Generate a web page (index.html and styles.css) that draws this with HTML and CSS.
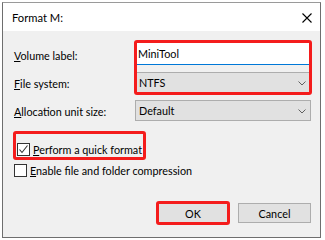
FILE: index.html
```html
<!DOCTYPE html>
<html lang="en">
<head>
  <meta charset="UTF-8">
  <title>Format M:</title>
  <link rel="stylesheet" href="styles.css">
</head>
<body>
  <div class="window">
    <div class="titlebar">
      <span class="title">Format M:</span>
      <svg class="close" width="10" height="10" viewBox="0 0 10 10">
        <path d="M0.5 0.5 L9.5 9.5 M9.5 0.5 L0.5 9.5" stroke="#000" stroke-width="1.1" fill="none"/>
      </svg>
    </div>

    <div class="content">
      <div class="form">
        <label class="lbl row1"><u>V</u>olume label:</label>
        <div class="field textbox row1">MiniTool</div>

        <label class="lbl row2"><u>F</u>ile system:</label>
        <div class="field select row2">
          <span>NTFS</span>
          <svg class="chev" width="8" height="5" viewBox="0 0 8 5"><path d="M0.5 0.5 L4 4 L7.5 0.5" stroke="#606060" fill="none"/></svg>
        </div>

        <div class="mark"></div>

        <label class="lbl row3"><u>A</u>llocation unit size:</label>
        <div class="field select row3">
          <span>Default</span>
          <svg class="chev" width="8" height="5" viewBox="0 0 8 5"><path d="M0.5 0.5 L4 4 L7.5 0.5" stroke="#606060" fill="none"/></svg>
        </div>
      </div>

      <div class="checks">
        <div class="mark-box">
          <div class="check">
            <span class="box">
              <svg width="11" height="11" viewBox="0 0 11 11"><path d="M1.5 5.5 L4 8.5 L9.5 1.5" stroke="#333" stroke-width="1.1" fill="none"/></svg>
            </span>
            <span><u>P</u>erform a quick format</span>
          </div>
        </div>
        <div class="check plain">
          <span class="box"></span>
          <span><u>E</u>nable file and folder compression</span>
        </div>
      </div>

      <div class="buttons">
        <button class="btn ok">OK</button>
        <button class="btn">Cancel</button>
      </div>
    </div>
  </div>
</body>
</html>
```

FILE: styles.css
```css
body {
  margin: 0;
  padding: 2px;
  background: #fff;
  font-family: 'Lato', sans-serif;
  font-size: 10.8px;
  color: #000;
}

.window {
  width: 317px;
  height: 234px;
  border: 1px solid #6e6e6e;
  border-top-color: #9a9a9a;
  background: #f0f0f0;
  display: flex;
  flex-direction: column;
}

.titlebar {
  height: 28px;
  background: #fff;
  display: flex;
  align-items: center;
  justify-content: space-between;
  padding: 0 8px 0 9px;
  font-size: 11.2px;
}

.close {
  margin-top: 2px;
}

.content {
  padding: 12px 9px 0 11px;
}

/* label / field grid */
.form {
  display: grid;
  grid-template-columns: 121px 1fr;
  grid-template-rows: 22px 21px 21px;
  row-gap: 7px;
}

.lbl {
  align-self: center;
  padding-top: 2px;
}

.row1 { grid-row: 1; }
.row2 { grid-row: 2; }
.row3 { grid-row: 3; }

.lbl { grid-column: 1; }
.field { grid-column: 2; }

.field {
  display: flex;
  align-items: center;
  padding-left: 3px;
}

.textbox {
  background: #fff;
  border-bottom: 1px solid #0078d7;
}

.select {
  background: #e1e1e1;
  border: 1px solid #adadad;
  justify-content: space-between;
  padding-right: 4px;
}

.chev {
  margin-top: 2px;
}

.mark {
  grid-column: 2;
  grid-row: 1 / 3;
  margin: -3px -1px -2px -1px;
  border: 3px solid #f41c1c;
  border-radius: 3px;
  pointer-events: none;
}

/* checkboxes */
.checks {
  margin-top: 10px;
}

.mark-box {
  display: inline-block;
  margin-left: -1px;
  padding: 7px 1px 0 1px;
  border: 3px solid #f41c1c;
  border-radius: 3px;
}

.check {
  display: flex;
  align-items: center;
  gap: 3px;
  height: 16px;
}

.check.plain {
  height: 20px;
}

.box {
  width: 11px;
  height: 11px;
  border: 1px solid #333;
  background: #fff;
  display: flex;
}

/* buttons */
.buttons {
  margin-top: 21px;
  display: flex;
  justify-content: flex-end;
  align-items: center;
  gap: 8px;
}

.btn {
  font-family: 'Lato', sans-serif;
  font-size: 10.8px;
  color: #000;
  background: #e1e1e1;
  border: 1px solid #adadad;
  width: 73px;
  height: 20px;
  padding: 0;
}

.btn.ok {
  width: 74px;
  height: 24px;
  border: 3px solid #f41c1c;
  border-radius: 3px;
}
```
